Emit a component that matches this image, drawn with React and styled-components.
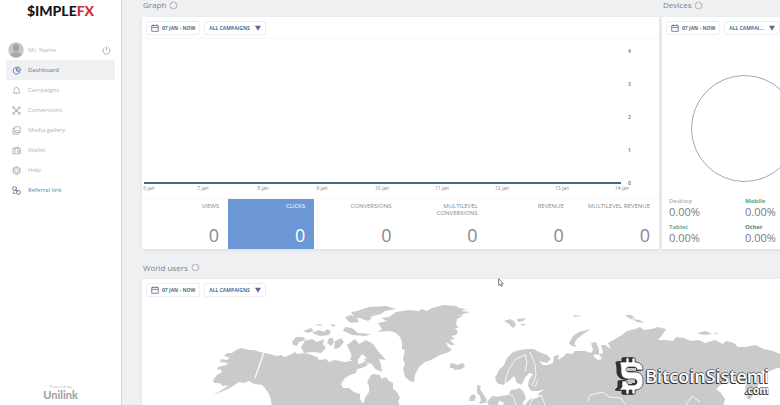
import React from 'react';
import styled, { createGlobalStyle } from 'styled-components';

const GlobalStyle = createGlobalStyle`
	* {
		box-sizing: border-box;
	}
	body {
		margin: 0;
		font-family: 'Open Sans', 'Noto Sans', sans-serif;
		color: #85898f;
		background: #eff0f2;
	}
	button {
		font-family: inherit;
	}
`;

const Page = styled.div`
	position: relative;
	display: flex;
	height: 100vh;
	overflow: hidden;
`;

const Sidebar = styled.aside`
	flex: none;
	width: 122px;
	display: flex;
	flex-direction: column;
	padding: 0 6px;
	background: #ffffff;
	border-right: 1px solid #d3d6e2;
`;

const Logo = styled.a`
	padding-top: 2px;
	height: 40px;
	text-align: center;
	font-family: Lato, sans-serif;
	font-weight: 900;
	font-size: 14px;
	line-height: 17px;
	color: #171717;
	text-decoration: none;
`;

const LogoAccent = styled.span`
	color: #cf2f35;
`;

const User = styled.div`
	display: flex;
	align-items: center;
	gap: 4px;
	height: 20px;
	padding: 0 4px 0 2px;
	font-size: 6px;
	line-height: 8px;
	color: #b5b7ba;
`;

const UserName = styled.span`
	flex: 1;
`;

const IconButton = styled.button`
	display: flex;
	padding: 0;
	border: 0;
	background: none;
	color: #a3a6ab;
`;

const Nav = styled.nav`
	flex: 1;
	display: flex;
	flex-direction: column;
`;

const NavLink = styled.a`
	display: flex;
	align-items: center;
	gap: 7px;
	height: 20px;
	padding-left: 6px;
	font-size: 6px;
	line-height: 8px;
	text-decoration: none;
	color: ${(props) => props.$color || '#b2b4b8'};
	background: ${(props) => (props.$active ? '#eff1f3' : 'none')};
`;

const PoweredBy = styled.div`
	padding-bottom: 4px;
	text-align: center;
	font-size: 4px;
	line-height: 5px;
	color: #b2b4b8;
`;

const Unilink = styled.div`
	font-family: Lato, sans-serif;
	font-weight: 700;
	font-size: 11px;
	line-height: 12px;
	color: #9b9da1;
`;

const Main = styled.main`
	flex: 1;
	min-width: 0;
	padding-left: 20px;
`;

/* the board is wider than the window, its right edge is cut off */
const Board = styled.div`
	width: calc(100% + 46px);
	display: grid;
	grid-template-columns: minmax(0, 1fr) 164px;
	column-gap: 3px;
	row-gap: 12px;
`;

const Panel = styled.section`
	display: flex;
	flex-direction: column;
	grid-column: ${(props) => (props.$wide ? '1 / -1' : 'auto')};
`;

const Title = styled.h2`
	display: flex;
	align-items: center;
	gap: 3px;
	height: ${(props) => (props.$low ? '18px' : '17px')};
	padding: ${(props) => (props.$low ? '0 0 5px 1px' : '0 0 7px 1px')};
	margin: 0;
	font-weight: 400;
	font-size: 8px;
	line-height: 10px;
	color: #7d8187;
`;

const Card = styled.div`
	flex: 1;
	display: flex;
	flex-direction: column;
	background: #ffffff;
	box-shadow: 0 1px 3px #d9dbdf;
`;

const Toolbar = styled.div`
	display: flex;
	gap: 4px;
	height: 22px;
	padding: 4px 4px 3px;
	border-bottom: 1px solid ${(props) => (props.$plain ? '#ffffff' : '#f6f7f8')};
`;

const Filter = styled.button`
	display: flex;
	align-items: center;
	gap: ${(props) => (props.$select ? '5px' : '3px')};
	height: 14px;
	padding: 0 4px;
	border: 1px solid #eceef1;
	border-radius: 2px;
	background: #ffffff;
	font-weight: 700;
	font-size: 5px;
	line-height: 8px;
	white-space: nowrap;
	color: #596d8e;
`;

const Plot = styled.svg`
	display: block;
	width: 100%;
	height: auto;
	font-size: 5px;
	fill: #7f8389;
`;

const Scale = styled.g`
	font-weight: 600;
	fill: #63676e;
`;

const Stats = styled.div`
	display: grid;
	grid-template-columns: repeat(6, minmax(0, 1fr));
	height: 50px;
`;

const Stat = styled.div`
	display: flex;
	flex-direction: column;
	justify-content: space-between;
	padding: 4px 9px 4px 8px;
	text-align: right;
	font-size: 6px;
	line-height: 7px;
	color: ${(props) => (props.$active ? '#ffffff' : '#85898f')};
	background: ${(props) => (props.$active ? '#6c97d5' : 'none')};
`;

const StatLabel = styled.div`
	white-space: pre;
`;

const StatValue = styled.div`
	font-size: 18px;
	line-height: 20px;
`;

const Devices = styled.div`
	display: grid;
	grid-template-columns: 76px 1fr;
	row-gap: 5px;
	padding: 0 7px;
`;

const DeviceLabel = styled.div`
	font-weight: ${(props) => (props.$light ? 400 : 700)};
	font-size: 6px;
	line-height: 9px;
	color: ${(props) => props.$color};
`;

const DeviceValue = styled.div`
	font-size: 11px;
	line-height: 12px;
	color: #777b81;
`;

const Ring = styled.div`
	width: 107px;
	height: 107px;
	margin: 36px 0 15px 29px;
	border: 1px solid #a4a6a9;
	border-radius: 50%;
`;

const Map = styled.svg`
	display: block;
	width: 100%;
	height: auto;
`;

const Pointer = styled.svg`
	position: absolute;
	left: 498px;
	top: 278px;
`;

const Watermark = styled.div`
	position: absolute;
	right: 11px;
	bottom: 10px;
	display: flex;
	align-items: flex-end;
	color: #ffffff;
`;

const WatermarkText = styled.div`
	display: flex;
	flex-direction: column;
	align-items: flex-end;
	text-shadow: -1px 0 #35353c, -1px 1px #35353c, 0 1px #35353c, 0 -1px #77777c;
`;

const WatermarkName = styled.div`
	font-weight: 600;
	font-size: 18px;
	line-height: 20px;
`;

const WatermarkDomain = styled.div`
	font-weight: 700;
	font-size: 10px;
	line-height: 9px;
`;

const navItems = [
	{ name: 'Dashboard', icon: 'pie', color: '#5876ac', active: true },
	{ name: 'Campaigns', icon: 'bell' },
	{ name: 'Conversions', icon: 'nodes' },
	{ name: 'Media gallery', icon: 'media' },
	{ name: 'Wallet', icon: 'wallet' },
	{ name: 'Help', icon: 'help' },
	{ name: 'Referral link', icon: 'link', color: '#687fa0' },
];

const stats = [
	{ name: 'VIEWS', value: 0 },
	{ name: 'CLICKS', value: 0, active: true },
	{ name: 'CONVERSIONS', value: 0 },
	{ name: 'MULTILEVEL\nCONVERSIONS', value: 0 },
	{ name: 'REVENUE', value: 0 },
	{ name: 'MULTILEVEL REVENUE', value: 0 },
];

const devices = [
	{ name: 'Desktop', color: '#8f969c', light: true },
	{ name: 'Mobile', color: '#4ba78f' },
	{ name: 'Tablet', color: '#55b59d' },
	{ name: 'Other', color: '#567f83' },
];

const days = [6, 7, 8, 9, 10, 11, 12, 13, 14];

const icons = {
	pie: (
		<>
			<path d="M4.2 1.3A3.4 3.4 0 1 0 7.8 6L4.5 5Z" />
			<path d="M5.7.9v3l2.8.8A3.1 3.1 0 0 0 5.7.9Z" />
		</>
	),
	bell: <path d="M1 7h7L7 5.5V4a2.5 2.5 0 0 0-5 0v1.5ZM3.6 7.2a1 1 0 0 0 1.8 0M4.5.6v.9" />,
	nodes: (
		<>
			<path d="M2 2l5 5M7 2L2 7" />
			<path d="M.8.8h1.6v1.6H.8zM6.6.8h1.6v1.6H6.6zM.8 6.6h1.6v1.6H.8zM6.6 6.6h1.6v1.6H6.6zM3.4 3.4h2.2v2.2H3.4z" />
		</>
	),
	media: (
		<>
			<path d="M2.6.8h5.7v5.7H2.6zM2.6 2.4H.9v5.8h5.7V6.5" />
			<path d="M3 5.8l1.6-2 1.2 1.3.8-.7L8 6" />
		</>
	),
	wallet: <path d="M.8 2.5h7.4v5.3H.8zM1 2.4L6.3.9v1.6M3 2.7v5M5.4 4.2h2.8v2H5.4z" />,
	help: (
		<>
			<circle cx="4.5" cy="4.5" r="3.5" strokeWidth="1.4" strokeDasharray="3.2 .5" />
			<circle cx="4.5" cy="4.5" r="1.7" />
		</>
	),
	link: (
		<>
			<rect x=".8" y=".8" width="3.6" height="3.6" rx="1" />
			<rect x="4.6" y="4.6" width="3.6" height="3.6" rx="1" />
			<path d="M3 3l3 3M1.5 5.5v2h2" />
		</>
	),
	power: <path d="M2.8 1.7a3.5 3.5 0 1 0 3.4 0M4.5.5v3.7" />,
	calendar: <path d="M.8 1.7h7.4v6.5H.8zM.8 3.8h7.4M2.6.4v2M6.4.4v2" />,
	refresh: <circle cx="4.5" cy="4.5" r="3.4" stroke="#a0a3a8" strokeDasharray="4.6 .74" />,
};

const Icon = ({ name, size = 9 }) => (
	<svg width={size} height={size} viewBox="0 0 9 9" fill="none" stroke="currentColor" strokeWidth=".9" aria-hidden="true">
		{icons[name]}
	</svg>
);

const Avatar = () => (
	<svg width="16" height="16" viewBox="0 0 16 16" aria-hidden="true">
		<circle cx="8" cy="8" r="7.7" fill="#c5c5c5" />
		<path d="M5 5.5a3 3.3 0 0 1 6 0C11 8 9.8 9.4 8 9.4S5 8 5 5.5Z" fill="#a2a2a2" />
		<path d="M2.5 13.2C3.8 10.6 6 10 8 10s4.2.6 5.5 3.2A7.7 7.7 0 0 1 2.5 13.2Z" fill="#aaa" />
	</svg>
);

const Heading = ({ text, low }) => (
	<Title $low={low}>
		{text}
		<Icon name='refresh' />
	</Title>
);

const Filters = ({ campaigns, plain }) => (
	<Toolbar $plain={plain}>
		<Filter type='button'>
			<Icon name='calendar' size={8} />
			07 JAN - NOW
		</Filter>
		<Filter type='button' $select>
			{campaigns}
			<svg width="6" height="6" viewBox="0 0 6 6" fill="currentColor" aria-hidden="true">
				<path d="M0 .8h6L3 5.8Z" />
			</svg>
		</Filter>
	</Toolbar>
);

const Graph = () => (
	<Plot viewBox='0 0 517 160' role='img' aria-label='Clicks by day'>
		<Scale>
			{[4, 3, 2, 1, 0].map((tick, i) => (
				<text key={tick} x='486' y={14 + i * 33}>{tick}</text>
			))}
		</Scale>
		<path d='M2 144H479' stroke='#486682' strokeWidth='2' />
		{days.map((day, i) => (
			<text key={day} x={i === 0 ? 7 : 1 + i * 60 - (i > 2 ? 1 : 0)} y='151' textAnchor='middle'>
				{day} jan
			</text>
		))}
		<path d='M0 159.500H517' stroke='#f8f8f9' />
	</Plot>
);

const WorldMap = () => (
	<Map viewBox='142 301 684 105' role='img' aria-label='World users map'>
		<g fill='#cacaca'>
			{/* north america */}
			<path d='M217 375l5-3-2-3-3 1 1-3 8-2 2-2-8-1 1-3 6 1 3-2-6-2 3-3 5 0 4-3 5-2 8 2 5 0 6 2 10 2 7 2 5-1 2 2 6-2 5-3 2 2 6-1 6 1 8 3 2 3 7-1 3 3 6-2 9 2 7-1 3-3 4 2 0 4 4-1 3-2 3 4-6 3-5 1-1 4-6 2-5 3-4 6 2 4 6 0 5 4 6 2 0 5 3 5 2-6 4-6 0-6-2-4 4-7 3-1 6 1 1 4 5-2 3 4 4 2 0 6 4 3 3 6-2 3 2 6H272l-1-7-2-6-4-6-3-3-8-1-5-3-5 2-5-1-9 6-9 4-8 3 9-5 7-5-6 1-4-3-5 0-1-3Z' />
			<path d='M292 342l4-5 7 0 3 3-7 2-2 4-4-1ZM301 347l4-6 7-2 5 3 7-3-1 5 3 4-5 5-8-1-9 1ZM303 331l8-3 3 3-6 2ZM312 333l7-3 5 2 3-3 4 2-2 4-9 1-3-1ZM327 343l2-5 4 0 1 4-3 4ZM335 341l6-3 3 4-5 6-5 1ZM343 331l2-4 7 1 6 5 13 1-5 2-14-1-4-2ZM330 324l6 1-3 2ZM315 325l5-1 3 2ZM345 317l6-2 6 3 2 4-8 1-4-3ZM351 312l7-1 7 5 7 2-4 3-8-3-5 0ZM357 311l12-4 17-1 10 3-11 2-4 3-8 2-7 4-4-1 3-4-9-1ZM347 345l8-6 4 5 7-4 7 4 5 7 8 9-7-1 2 6 1 7-7-3-3-5-6-1 1-5-5-4-2 3-7 1ZM350 360l2-6 5-2 4 2-2 5-4 1ZM364 359l4-1 2 2-4 2Z' />
			{/* greenland and the atlantic islands */}
			<path d='M378 323l9-2-6-3 8-1 7-5 13-2 10 1 3-2 5 2 5-3 12-3 12 1 3 2 7 1-5 2 9 1-13 4 7-1-7 4-1 6 3 2-4 2 3 2-2 4-5 1 4 3-5 1 5 5-4 0-5-3 2 5 4 2-3 3-9 3-9 5-6 2-6 5-4 8-1 7-4-1-5-4-2-8 2-5-2-5 2-9-3-1 0-7-2-5-4-4-6-2-12 1 4-3Z' />
			<path d='M450 364l3-1 4 2 6-2 2 3-3 3-7 1-2-2-3 0ZM477 385l4 1-1 3 4 6 3 5-2 3-6 1 2-4-1-4-3-3ZM470 396l4-2 2 3-2 4-5 0ZM504 321l6-2 4 2 2 4-3 3-4-4ZM517 319l9-1-3 3-5 1ZM520 324l6 0-3 2Z' />
			{/* europe and asia */}
			<path d='M496 376l3-6 5-5 3-7 6-6 7-2 7-1 7 0 5 3 8 3 4 4-4 4-8-2 4 4 4 0 6-2 1-7 5-1-1 5 6-4 3-3 5 1 3-3 10 0 6 2 2-3-2-7 5-1 3 7 0 5 4-1-2-8 4 0 6 4-3-6 7-4 7-4 5-4 8-2 5-2 4 3 8-1 6-2 8 2-3 5-5 6 8 0 7 1 3-4 8 1 7 3 8-1 6 3 10-3 8 4 3-3 8 2 4 4 8 0 9-2 9 4 9 2 16 7v12l-12-2-10 4-3-2-6 6 3 3-5 11-6 10-3-2-2-10 3-9-6-4-5 4-12 2-9 8 5 4 4 6-2 8H501l3-4-6-3 2-4 8-1 3-5 7-1 4-4-5-2-3-7-5 5-6 4-6-2-2-6Z' />
			<path d='M569 343l4-7 6-4 12-3-9 6-5 4-3 5 3 3-5-1ZM625 315l6 0 4 3-5 1ZM632 319l8 1 4 3-7-1ZM697 333l9-2 6 3-8 1ZM487 402l5-6 8 1-2 8h-9ZM573 315l9 1-7 1ZM713 333l6 0-3 1Z' />
		</g>
		<g fill='#ffffff'>
			<path d='M522 384l3-6 4-5 4 1-4 6-1 6 3 5 7 0 7-2-6 4-2 5-7 1-5 6-3-1 4-6-3-7-5-4Z' />
			<path d='M594 354l6 1 2 4-4 1-4-3Z' />
		</g>
		<g fill='none' stroke='#ffffff' strokeWidth='.8'>
			<path d='M264 352l-9 26' strokeWidth='1.2' />
			<path d='M508 392l-3-11 4-12 7-10 9-4M525 354l2 9-2 8M530 352l5 12 1 11-4 11M516 405l-3-9-7-3M530 393l12 4 3 8M535 387l3-7M587 402l3-7 13-3 6 5 12 1 4 6M686 405l6-9 8 6M530 405l2-6 10-4' />
		</g>
	</Map>
);

const coinShape =
	'M6 5h6V1h3v4h3V1h3v4c5 0 8 3 8 8h-6c0-2-1-3-3-3h-5c-4 0-4 5 0 5h6c5 0 8 3 8 8v2c0 5-3 8-8 8v4h-3v-4h-3v4h-3v-4H5l3-3v-6h5v1c0 2 1 3 3 3h4c4 0 4-6 0-6h-6c-5 0-7-4-7-7 0-4 0-6-1-9Z';

const Coin = () => (
	<svg width="31" height="38" viewBox="0 0 31 38" aria-hidden="true">
		<g fill="#303038" stroke="#303038">
			{[-4, -3, -2, -1].map((x) => (
				<path key={x} d={coinShape} transform={`translate(${x} 0)`} />
			))}
		</g>
		<path d="M14 11h8v3h-8ZM14 21h7v5h-7Z" fill="#c4c4c4" />
		<path d={coinShape} fill="#ffffff" stroke="#303038" strokeWidth=".7" />
	</svg>
);

const App = () => {
	return (
		<Page>
			<GlobalStyle />
			<Sidebar>
				<Logo href='#'>
					$IMPLE<LogoAccent>FX</LogoAccent>
				</Logo>
				<User>
					<Avatar />
					<UserName>Mr. Name</UserName>
					<IconButton type='button' aria-label='Log out'>
						<Icon name='power' />
					</IconButton>
				</User>
				<Nav>
					{navItems.map((item) => (
						<NavLink key={item.name} href='#' $color={item.color} $active={item.active}>
							<Icon name={item.icon} />
							{item.name}
						</NavLink>
					))}
				</Nav>
				<PoweredBy>
					Powered by
					<Unilink>Unilink</Unilink>
				</PoweredBy>
			</Sidebar>
			<Main>
				<Board>
					<Panel>
						<Heading text='Graph' />
						<Card>
							<Filters campaigns='ALL CAMPAIGNS' />
							<Graph />
							<Stats>
								{stats.map((stat) => (
									<Stat key={stat.name} $active={stat.active}>
										<StatLabel>{stat.name}</StatLabel>
										<StatValue>{stat.value}</StatValue>
									</Stat>
								))}
							</Stats>
						</Card>
					</Panel>
					<Panel>
						<Heading text='Devices' />
						<Card>
							<Filters campaigns='ALL CAMPAI...' plain />
							<Ring />
							<Devices>
								{devices.map((device) => (
									<div key={device.name}>
										<DeviceLabel $color={device.color} $light={device.light}>
											{device.name}
										</DeviceLabel>
										<DeviceValue>0.00%</DeviceValue>
									</div>
								))}
							</Devices>
						</Card>
					</Panel>
					<Panel $wide>
						<Heading text='World users' low />
						<Card>
							<Filters campaigns='ALL CAMPAIGNS' plain />
							<WorldMap />
						</Card>
					</Panel>
				</Board>
			</Main>
			<Pointer width="6" height="9" viewBox="0 0 6 9" aria-hidden="true">
				<path d="M.6.6v6.8l1.5-1.3 1 2.3 1.2-.5-1-2.2h2Z" fill="#fff" stroke="#555" strokeWidth=".7" />
			</Pointer>
			<Watermark>
				<Coin />
				<WatermarkText>
					<WatermarkName>BitcoinSistemi</WatermarkName>
					<WatermarkDomain>.com</WatermarkDomain>
				</WatermarkText>
			</Watermark>
		</Page>
	);
};

export default App;
